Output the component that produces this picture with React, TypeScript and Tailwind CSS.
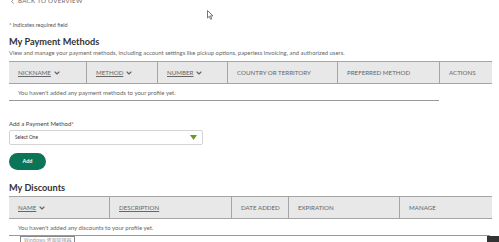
import { ChevronLeft, ChevronDown } from 'lucide-react';

const paymentCols = [
    { label: 'NICKNAME', w: 'w-[78px]', sort: true },
    { label: 'METHOD', w: 'w-[71px]', sort: true },
    { label: 'NUMBER', w: 'w-[70px]', sort: true },
    { label: 'COUNTRY OR TERRITORY', w: 'w-[110px]', sort: false },
    { label: 'PREFERRED METHOD', w: 'w-[102px]', sort: false },
    { label: 'ACTIONS', w: 'flex-1', sort: false },
];

const discountCols = [
    { label: 'NAME', w: 'w-[101px]', sort: true, link: true },
    { label: 'DESCRIPTION', w: 'w-[122px]', sort: false, link: true },
    { label: 'DATE ADDED', w: 'w-[57px]', sort: false, link: false },
    { label: 'EXPIRATION', w: 'w-[111px]', sort: false, link: false },
    { label: 'MANAGE', w: 'flex-1', sort: false, link: false },
];

function HeaderCell({ label, w, sort, link, last }: { label: string; w: string; sort?: boolean; link?: boolean; last?: boolean }) {
    return (
        <div className={`${w} flex items-center h-full pl-[9px] ${last ? '' : 'border-r-[1.5px] border-[#a5a5a5]'}`}>
            <span className={`text-[6.2px] text-[#666] ${link ? 'underline' : ''}`}>{label}</span>
            {sort && <ChevronDown className="w-[8px] h-[8px] ml-[2px] text-[#666]" strokeWidth={3.5} />}
        </div>
    );
}

export default function App() {
    return (
        <div className="w-[499px] h-[242px] overflow-hidden bg-white relative font-['Lato',sans-serif] text-[#444]">
            <div className="pl-[9px] pr-[7px]">
                {/* Back link */}
                <div className="flex items-center -mt-[4px] h-[10px] text-[#666]">
                    <ChevronLeft className="w-[7px] h-[7px]" strokeWidth={2.5} />
                    <span className="text-[6.2px] ml-[2px] tracking-[0.3px]">BACK TO OVERVIEW</span>
                </div>

                <p className="mt-[16px] text-[5.5px] leading-[6px] text-[#555]">* Indicates required field</p>

                <h2 className="mt-[8px] text-[9.2px] leading-[11px] font-bold text-[#333]">My Payment Methods</h2>
                <p className="mt-[2px] text-[5.9px] leading-[7px] text-[#666]">
                    View and manage your payment methods, including account settings like pickup options, paperless invoicing, and authorized users.
                </p>

                {/* Payment methods table */}
                <div className="mt-[5px] w-[483px] h-[23px] flex bg-[#e8e8e8] border-t-[1.5px] border-b-[1.5px] border-[#a5a5a5]">
                    {paymentCols.map((c, i) => (
                        <HeaderCell key={c.label} label={c.label} w={c.w} sort={c.sort} link={c.sort} last={i === paymentCols.length - 1} />
                    ))}
                </div>
                <div className="w-[430px] h-[17px] flex items-center pl-[9px] border-b border-[#999]">
                    <span className="text-[6px] text-[#666]">You haven't added any payment methods to your profile yet.</span>
                </div>

                {/* Add payment method */}
                <label className="block mt-[19px] text-[6px] leading-[7px] text-[#444]">Add a Payment Method*</label>
                <div className="mt-[3px] w-[194px] h-[15px] flex items-center justify-between pl-[5px] pr-[5px] border border-[#d4d4d4] rounded-[2px]">
                    <span className="text-[4.8px] text-[#333]">Select One</span>
                    <svg width="7" height="5" viewBox="0 0 7 5">
                        <polygon points="0,0 7,0 3.5,5" fill="#6b9a24" />
                    </svg>
                </div>
                <button className="mt-[8px] w-[37px] h-[17px] rounded-full bg-[#0c7557] text-white text-[5.5px] font-bold flex items-center justify-center">
                    Add
                </button>

                <h2 className="mt-[12px] text-[9.2px] leading-[11px] font-bold text-[#333]">My Discounts</h2>

                {/* Discounts table */}
                <div className="mt-[3px] w-[483px] h-[23px] flex bg-[#e8e8e8] border-t-[1.5px] border-b-[1.5px] border-[#a5a5a5]">
                    {discountCols.map((c, i) => (
                        <HeaderCell key={c.label} label={c.label} w={c.w} sort={c.sort} link={c.link} last={i === discountCols.length - 1} />
                    ))}
                </div>
                <div className="w-[481px] h-[17px] flex items-center pl-[9px] border-b border-[#999]">
                    <span className="text-[6px] text-[#666]">You haven't added any discounts to your profile yet.</span>
                </div>
            </div>

            {/* Windows tooltip overlay */}
            <div className="absolute left-[20px] top-[236px] h-[8px] px-[3px] bg-white border border-[#888] text-[5px] leading-[6px] text-[#999] font-['Noto_Sans_CJK_SC',sans-serif]">
                Windows 资源管理器
            </div>
            <div className="absolute left-[487px] top-[236px] w-[12px] h-[6px] bg-[#333]" />
            {/* cursor */}
            <svg className="absolute left-[207px] top-[10px]" width="7" height="10" viewBox="0 0 7 10">
                <path d="M0.5 0.5 L0.5 8 L2.3 6.3 L3.6 9.3 L4.8 8.8 L3.5 5.9 L6 5.9 Z" fill="white" stroke="#555" strokeWidth="0.8" />
            </svg>
        </div>
    );
}
